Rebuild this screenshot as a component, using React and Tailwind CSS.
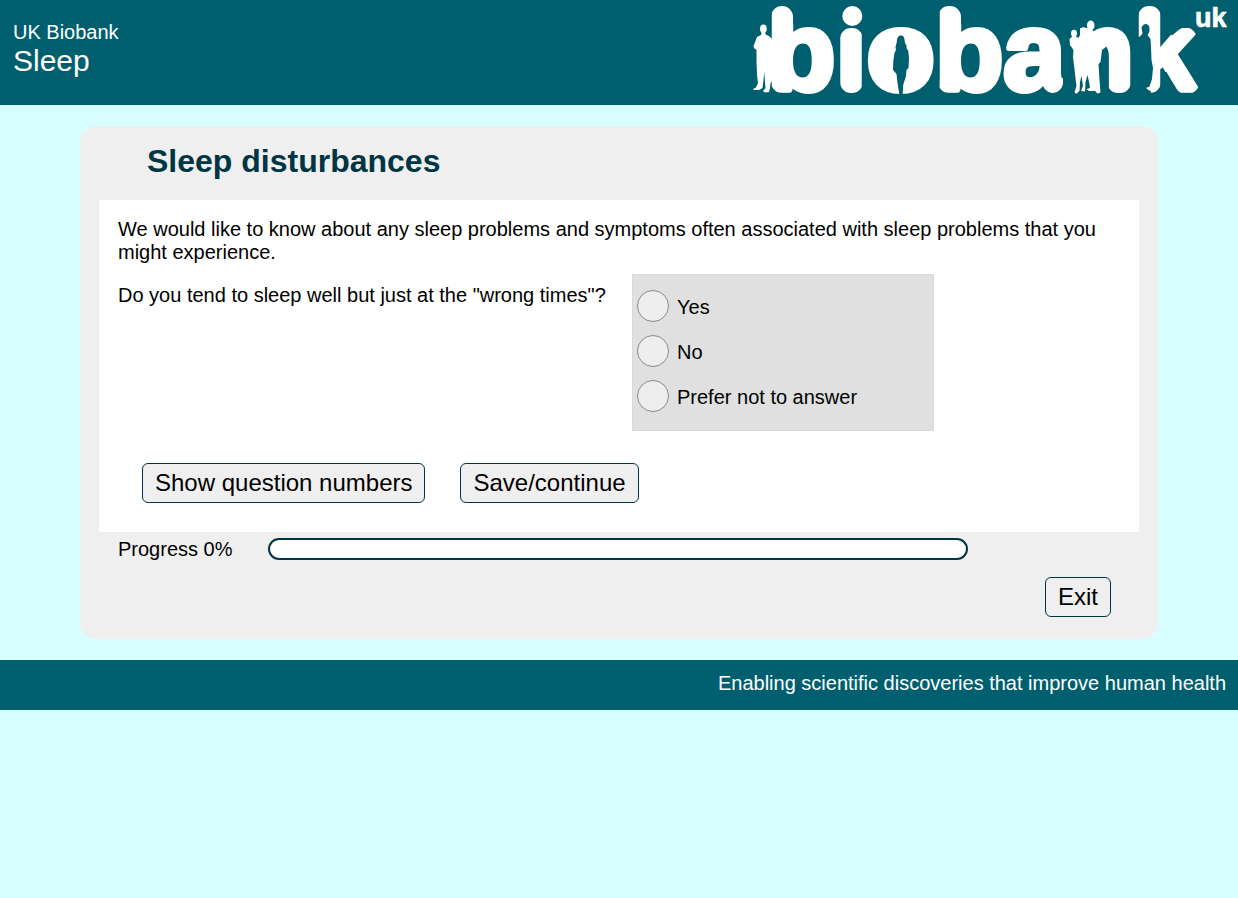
import React, { useState } from "react";

function BiobankLogo() {
  return (
    <svg
      viewBox="0 0 480 105"
      className="block h-[105px] w-[480px] shrink-0 overflow-visible"
      role="img"
      aria-label="biobank uk"
      fontFamily='"Liberation Sans", Arial, sans-serif'
      fontWeight="700"
    >
      <defs>
        <clipPath id="rounded-terminals">
          <rect x="21" y="6" width="22" height="87" rx="11" />
          <rect x="32" y="24" width="58" height="72" />
          <rect x="90" y="28" width="23" height="65" rx="11" />
          <rect x="116" y="24" width="69" height="72" />
          <rect x="188" y="6" width="23" height="87" rx="11" />
          <rect x="200" y="24" width="92" height="72" />
          <rect x="286" y="20" width="27" height="73" rx="11" />
          <rect x="330" y="24" width="55" height="32" />
          <rect x="357" y="40" width="24" height="53" rx="11" />
          <rect x="388" y="6" width="23" height="87" rx="11" />
          <rect x="380" y="28" width="67" height="23" rx="11" transform="rotate(-41 435 39.500)" />
          <rect x="383" y="69" width="67" height="25" rx="12" transform="rotate(59 437 81)" />
          <rect x="402" y="46" width="22" height="26" />
        </clipPath>
      </defs>
      <g clipPath="url(#rounded-terminals)">
        <text x="17" y="90" fontSize="112" fill="#fff" stroke="#fff" strokeWidth="6" strokeLinejoin="round">
          biobank
        </text>
      </g>
      <circle cx="102.300" cy="16" r="10" fill="#fff" />
      <text x="445" y="27" fontSize="27" fill="#fff" stroke="#fff" strokeWidth="0.700" strokeLinejoin="round">
        uk
      </text>

      {/* standing man */}
      <g fill="#fff">
        <ellipse cx="13.4" cy="28.8" rx="3.4" ry="4.4" />
        <path d="M11.8 32 L11 35 L7 37 L5.5 41 L3.5 46 L4 48 L6.5 50 L6.5 62 L7 75 L8 83 L6 87.500 L3 89 L4 90 L9 90 L12.500 88 L13.500 80 L14.300 72 L15 82 L15.500 88 L13 91 L15 92.500 L19 92 L20 88 L20.500 83 L23 80 L23 40 L19 36 L15.500 34.500 L15 32 Z" />
      </g>

      {/* woman inside the o */}
      <ellipse cx="151" cy="60.500" rx="28" ry="30" fill="#fff" />
      <path
        fill="#005f6e"
        d="M151 35.500 C148 35.500 147 38 146.800 42 L145.500 47 L146 50 L144.500 53 L143.300 61 L143 70 L146.500 74 L147.500 83 L149.300 94 L152.700 94 L153.200 85 L156 76 L156.500 70 L158.500 68 L159 58 L158.300 51 L156.500 48 L156.700 46 L155 43 C154.500 38 154 35.500 151 35.500 Z"
      />

      {/* group of three */}
      <g fill="#fff">
        <ellipse cx="324" cy="33.300" rx="3" ry="3.600" />
        <ellipse cx="333.500" cy="31.500" rx="3.400" ry="4.200" />
        <ellipse cx="340.700" cy="25.500" rx="3.800" ry="5" />
        <path d="M322.500 36 L319.500 39 L320 45 L323.500 50 L323 57 L324 65 L325 74 L326.500 86 L324.500 92 L326 94 L329.500 91 L330 82 L331.500 76 L333 86 L331 91 L335 91.500 L335.500 82 L337.500 75 L339.500 84 L340 88 L336.500 89 L339 91 L345 91 L347.500 93.500 L350.500 92.500 L349.500 80 L348.500 64 L350.500 62 L352 50 L357 46 L357 34 L350 31 L343 31 L342 29 L338 29 L336 34 L331 33 L328.500 38 L325 36 Z" />
      </g>

      {/* woman leaning against the k */}
      <path
        fill="#005f6e"
        d="M387 37 L390 36.500 L392.500 33.500 L391.500 28 C393 22.500 399 23 399.500 28 L399.300 32 L397.500 35 L400.500 39 L401 47 L401.500 60 L403 68 L402 79 L399.500 86.500 L396 88 L399 90.500 L401 91 L400 96 L387 96 Z"
      />
    </svg>
  );
}

const buttonClass =
  "h-10 rounded-md border border-[#003543] bg-[#efefef] px-3 text-2xl leading-7 text-black";

const answers = ["Yes", "No", "Prefer not to answer"];

export default function App() {
  const [answer, setAnswer] = useState("");

  return (
    <div className='min-h-screen bg-[#d7ffff] font-["Liberation_Sans",Arial,sans-serif] text-xl leading-[23px] text-black'>
      <header className="flex items-start justify-between bg-[#005f6e] pr-2 pl-[13px] text-white">
        <div className="pt-[21px]">
          <p>UK Biobank</p>
          <p className="text-[30px] leading-[34px]">Sleep</p>
        </div>
        <BiobankLogo />
      </header>

      <main className="mx-20 my-[21px] rounded-2xl bg-[#efefef] px-[19px] pb-[22px]">
        <h1 className="px-12 pt-[17px] pb-5 text-[32px] leading-[37px] font-bold text-[#003543]">
          Sleep disturbances
        </h1>

        <form className="bg-white px-[19px] pt-[18px] pb-[29px]" onSubmit={(e) => e.preventDefault()}>
          <p>
            We would like to know about any sleep problems and symptoms often associated with sleep
            problems that you might experience.
          </p>
          <div className="mt-[10px] flex">
            <p id="question" className="w-[514px] pt-[10px]">
              Do you tend to sleep well but just at the "wrong times"?
            </p>
            <div
              role="radiogroup"
              aria-labelledby="question"
              className="w-[302px] border border-[#d9d9d9] bg-[#e0e0e0] px-1 pt-2 pb-3"
            >
              {answers.map((label) => (
                <label key={label} className="flex h-[45px] items-center gap-2">
                  <input
                    type="radio"
                    name="wrong-times"
                    value={label}
                    checked={answer === label}
                    onChange={() => setAnswer(label)}
                    className="size-8 appearance-none rounded-full border border-[#8a8a8a] bg-[#eeeeee] checked:bg-[#003543]"
                  />
                  <span className="pt-1">{label}</span>
                </label>
              ))}
            </div>
          </div>
          <div className="mt-8 flex gap-[35px] pl-6">
            <button type="button" className={buttonClass}>
              Show question numbers
            </button>
            <button type="submit" className={buttonClass}>
              Save/continue
            </button>
          </div>
        </form>

        <div className="flex items-start px-[19px] pt-[6px]">
          <span id="progress-label" className="w-[150px]">
            Progress 0%
          </span>
          <div
            role="progressbar"
            aria-labelledby="progress-label"
            aria-valuenow={0}
            aria-valuemin={0}
            aria-valuemax={100}
            className="h-[22px] w-[700px] rounded-full border-2 border-[#003543] bg-white"
          />
        </div>
        <div className="mt-4 flex justify-end pr-7">
          <button type="button" className={buttonClass}>
            Exit
          </button>
        </div>
      </main>

      <footer className="bg-[#005f6e] px-3 pt-3 pb-[15px] text-right text-white">
        Enabling scientific discoveries that improve human health
      </footer>
    </div>
  );
}
